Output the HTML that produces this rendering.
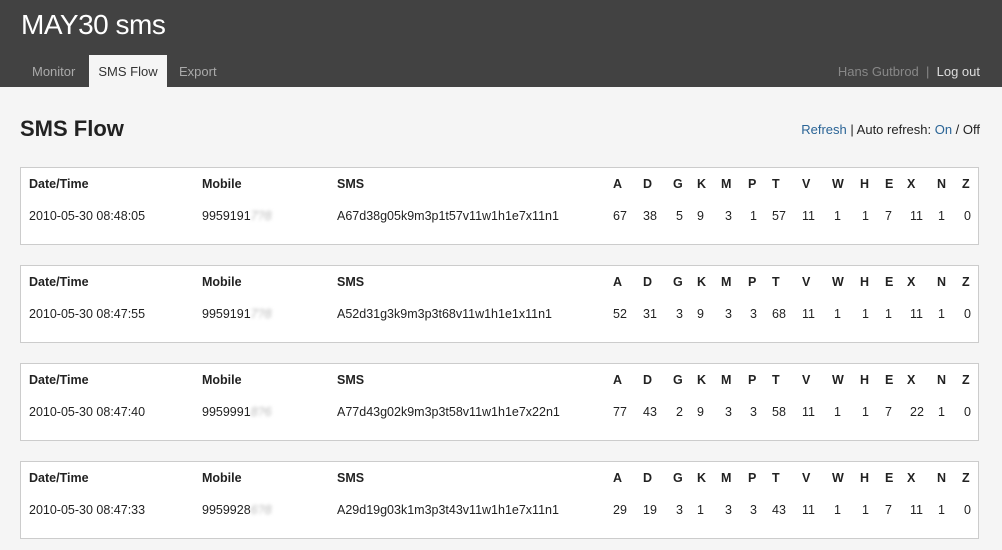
<!DOCTYPE html>
<html><head><meta charset="utf-8"><style>
*{margin:0;padding:0;box-sizing:border-box}
body{width:1002px;height:550px;background:#f5f5f5;font-family:"Liberation Sans","DejaVu Sans",sans-serif;font-size:13px;color:#222;position:relative;overflow:hidden}
.hd{position:absolute;left:0;top:0;width:1002px;height:87px;background:#424242}
.logo{position:absolute;left:21px;top:9px;font-size:28px;color:#fff;letter-spacing:-0.5px}
.tab{position:absolute;top:55px;height:32px;line-height:33px;color:#aaa;font-size:13px;padding:0 12px;white-space:nowrap}
.tab.on{background:#f5f5f5;color:#333;padding:0;text-align:center}
.usr{position:absolute;top:64px;right:22px;font-size:13px;color:#888;white-space:nowrap}
.usr b{font-weight:normal;color:#ddd}
h1{position:absolute;left:20px;top:116px;font-size:22px;font-weight:bold;color:#222}
.ref{position:absolute;right:22px;top:122px;font-size:13px;color:#222}
.ref a{color:#2a6496}
.box{position:absolute;left:20px;width:959px;height:78px;background:#fff;border:1px solid #ccc}
.box span{position:absolute;white-space:nowrap}
.h{top:9px;font-weight:bold;font-size:12.5px}
.d{top:41px;font-size:12.5px}
.bl{color:#bbb;filter:blur(1.5px)}
</style></head><body>
<div class="hd">
<div class="logo">MAY30 sms</div>
<div class="tab" style="left:20px">Monitor</div>
<div class="tab on" style="left:89px;width:78px">SMS Flow</div>
<div class="tab" style="left:167px">Export</div>
<div class="usr">Hans Gutbrod &nbsp;|&nbsp; <b>Log out</b></div>
</div>
<h1>SMS Flow</h1>
<div class="ref"><a>Refresh</a> | Auto refresh: <a>On</a> / <b style="font-weight:normal">Off</b></div>

<div class="box" style="top:167px">
<span class="h" style="left:8px">Date/Time</span><span class="h" style="left:181px">Mobile</span><span class="h" style="left:316px">SMS</span>
<span class="h" style="left:592px">A</span><span class="h" style="left:622px">D</span><span class="h" style="left:652px">G</span><span class="h" style="left:676px">K</span><span class="h" style="left:700px">M</span><span class="h" style="left:727px">P</span><span class="h" style="left:751px">T</span><span class="h" style="left:781px">V</span><span class="h" style="left:811px">W</span><span class="h" style="left:839px">H</span><span class="h" style="left:864px">E</span><span class="h" style="left:886px">X</span><span class="h" style="left:916px">N</span><span class="h" style="left:941px">Z</span>
<span class="d" style="left:8px">2010-05-30 08:48:05</span><span class="d" style="left:181px">9959191<i class="bl">7?8</i></span><span class="d" style="left:316px">A67d38g05k9m3p1t57v11w1h1e7x11n1</span>
<span class="d" style="left:592px">67</span><span class="d" style="left:622px">38</span><span class="d" style="left:655px">5</span><span class="d" style="left:676px">9</span><span class="d" style="left:704px">3</span><span class="d" style="left:729px">1</span><span class="d" style="left:751px">57</span><span class="d" style="left:781px">11</span><span class="d" style="left:813px">1</span><span class="d" style="left:841px">1</span><span class="d" style="left:864px">7</span><span class="d" style="left:889px">11</span><span class="d" style="left:917px">1</span><span class="d" style="left:943px">0</span>
</div>

<div class="box" style="top:265px">
<span class="h" style="left:8px">Date/Time</span><span class="h" style="left:181px">Mobile</span><span class="h" style="left:316px">SMS</span>
<span class="h" style="left:592px">A</span><span class="h" style="left:622px">D</span><span class="h" style="left:652px">G</span><span class="h" style="left:676px">K</span><span class="h" style="left:700px">M</span><span class="h" style="left:727px">P</span><span class="h" style="left:751px">T</span><span class="h" style="left:781px">V</span><span class="h" style="left:811px">W</span><span class="h" style="left:839px">H</span><span class="h" style="left:864px">E</span><span class="h" style="left:886px">X</span><span class="h" style="left:916px">N</span><span class="h" style="left:941px">Z</span>
<span class="d" style="left:8px">2010-05-30 08:47:55</span><span class="d" style="left:181px">9959191<i class="bl">7?8</i></span><span class="d" style="left:316px">A52d31g3k9m3p3t68v11w1h1e1x11n1</span>
<span class="d" style="left:592px">52</span><span class="d" style="left:622px">31</span><span class="d" style="left:655px">3</span><span class="d" style="left:676px">9</span><span class="d" style="left:704px">3</span><span class="d" style="left:729px">3</span><span class="d" style="left:751px">68</span><span class="d" style="left:781px">11</span><span class="d" style="left:813px">1</span><span class="d" style="left:841px">1</span><span class="d" style="left:864px">1</span><span class="d" style="left:889px">11</span><span class="d" style="left:917px">1</span><span class="d" style="left:943px">0</span>
</div>

<div class="box" style="top:363px">
<span class="h" style="left:8px">Date/Time</span><span class="h" style="left:181px">Mobile</span><span class="h" style="left:316px">SMS</span>
<span class="h" style="left:592px">A</span><span class="h" style="left:622px">D</span><span class="h" style="left:652px">G</span><span class="h" style="left:676px">K</span><span class="h" style="left:700px">M</span><span class="h" style="left:727px">P</span><span class="h" style="left:751px">T</span><span class="h" style="left:781px">V</span><span class="h" style="left:811px">W</span><span class="h" style="left:839px">H</span><span class="h" style="left:864px">E</span><span class="h" style="left:886px">X</span><span class="h" style="left:916px">N</span><span class="h" style="left:941px">Z</span>
<span class="d" style="left:8px">2010-05-30 08:47:40</span><span class="d" style="left:181px">9959991<i class="bl">8?6</i></span><span class="d" style="left:316px">A77d43g02k9m3p3t58v11w1h1e7x22n1</span>
<span class="d" style="left:592px">77</span><span class="d" style="left:622px">43</span><span class="d" style="left:655px">2</span><span class="d" style="left:676px">9</span><span class="d" style="left:704px">3</span><span class="d" style="left:729px">3</span><span class="d" style="left:751px">58</span><span class="d" style="left:781px">11</span><span class="d" style="left:813px">1</span><span class="d" style="left:841px">1</span><span class="d" style="left:864px">7</span><span class="d" style="left:889px">22</span><span class="d" style="left:917px">1</span><span class="d" style="left:943px">0</span>
</div>

<div class="box" style="top:461px">
<span class="h" style="left:8px">Date/Time</span><span class="h" style="left:181px">Mobile</span><span class="h" style="left:316px">SMS</span>
<span class="h" style="left:592px">A</span><span class="h" style="left:622px">D</span><span class="h" style="left:652px">G</span><span class="h" style="left:676px">K</span><span class="h" style="left:700px">M</span><span class="h" style="left:727px">P</span><span class="h" style="left:751px">T</span><span class="h" style="left:781px">V</span><span class="h" style="left:811px">W</span><span class="h" style="left:839px">H</span><span class="h" style="left:864px">E</span><span class="h" style="left:886px">X</span><span class="h" style="left:916px">N</span><span class="h" style="left:941px">Z</span>
<span class="d" style="left:8px">2010-05-30 08:47:33</span><span class="d" style="left:181px">9959928<i class="bl">6?8</i></span><span class="d" style="left:316px">A29d19g03k1m3p3t43v11w1h1e7x11n1</span>
<span class="d" style="left:592px">29</span><span class="d" style="left:622px">19</span><span class="d" style="left:655px">3</span><span class="d" style="left:676px">1</span><span class="d" style="left:704px">3</span><span class="d" style="left:729px">3</span><span class="d" style="left:751px">43</span><span class="d" style="left:781px">11</span><span class="d" style="left:813px">1</span><span class="d" style="left:841px">1</span><span class="d" style="left:864px">7</span><span class="d" style="left:889px">11</span><span class="d" style="left:917px">1</span><span class="d" style="left:943px">0</span>
</div>
</body></html>
